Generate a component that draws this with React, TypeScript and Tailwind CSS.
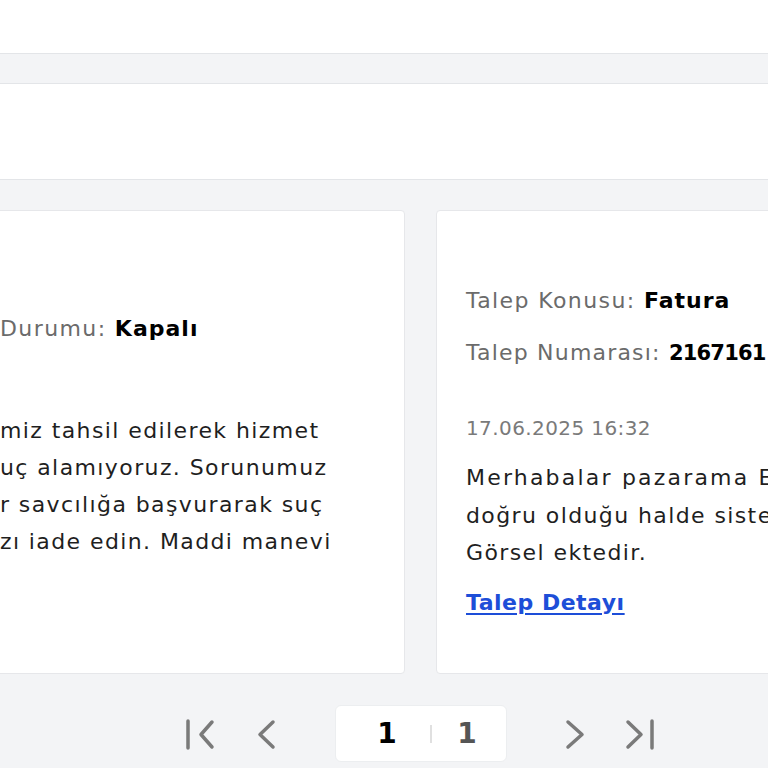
import type { ReactNode } from 'react';

const font = { fontFamily: '"DejaVu Sans", "Noto Sans", sans-serif' };

function ClippedLine({ hidden, children, className = '' }: { hidden: string; children: ReactNode; className?: string }) {
  // left part of the line sits outside the viewport
  return (
    <div className={`flex whitespace-nowrap ${className}`}>
      <span className="w-[125px] shrink-0 text-right">{hidden}</span>
      <span>{children}</span>
    </div>
  );
}

function PagerIcon({ d }: { d: string }) {
  return (
    <svg className="w-[32px] h-[32px] shrink-0" viewBox="0 0 32 32" fill="none" stroke="#7a7a7a" strokeWidth={3.5} strokeLinecap="round" strokeLinejoin="round">
      <path d={d} />
    </svg>
  );
}

export default function App() {
  return (
    <div className="h-screen w-full overflow-hidden bg-[#f3f4f6] text-[22px] tracking-[1.4px]" style={font}>
      {/* header strips */}
      <div className="h-[54px] bg-white border-b border-[#e3e5e8]" />
      <div className="h-[29px]" />
      <div className="h-[97px] bg-white border-y border-[#e3e5e8]" />

      {/* cards */}
      <div className="mt-[30px] -ml-[155px] flex gap-[31px]">
        <div className="w-[560px] h-[464px] shrink-0 bg-white border border-[#e6e7ea] rounded-[4px] pl-[29px] pt-[99px]">
          <ClippedLine hidden="Talep " className="leading-[38px] text-[#6b6b6b]">
            Durumu: <b className="font-bold text-black tracking-[1px]">Kapalı</b>
          </ClippedLine>
          <div className="mt-[64px] leading-[37px] text-[#1f1f1f]">
            <ClippedLine hidden="Ücreti">miz tahsil edilerek hizmet</ClippedLine>
            <ClippedLine hidden="son">uç alamıyoruz. Sorunumuz</ClippedLine>
            <ClippedLine hidden="Bizle">r savcılığa başvurarak suç</ClippedLine>
            <ClippedLine hidden="Paramı">zı iade edin. Maddi manevi</ClippedLine>
          </div>
        </div>

        <div className="w-[560px] h-[464px] shrink-0 bg-white border border-[#e6e7ea] rounded-[4px] pl-[29px] pt-[71px] whitespace-nowrap">
          <div className="leading-[38px] text-[#6b6b6b]">
            Talep Konusu: <b className="font-bold text-black tracking-[1px]">Fatura</b>
          </div>
          <div className="mt-[14px] leading-[38px] text-[#6b6b6b] tracking-[1.2px]">
            Talep Numarası: <b className="font-bold text-black text-[21px] tracking-[-0.8px]">2167161</b>
          </div>
          <div className="mt-[37px] leading-[38px] text-[20px] tracking-[0.4px] text-[#7a7a7a]">17.06.2025 16:32</div>
          <div className="mt-[12px] leading-[37.5px] text-[#1f1f1f]">
            <div className="tracking-[2.2px]">Merhabalar pazarama Elektrik fatura bilgilerimiz</div>
            <div>doğru olduğu halde sistemde hata görünmektedir.</div>
            <div>Görsel ektedir.</div>
          </div>
          <a href="#" className="mt-[12px] block leading-[38px] font-bold tracking-[0.5px] text-[#1d4ed8] underline underline-offset-[3px]">
            Talep Detayı
          </a>
        </div>
      </div>

      {/* pagination */}
      <div className="mt-[31px] ml-[184px] flex items-center tracking-normal">
        <PagerIcon d="M4 3V30M28 4L17 16.5L28 29" />
        <div className="ml-[35px]">
          <PagerIcon d="M22 4L9 16.5L22 29" />
        </div>
        <div className="ml-[52px] w-[172px] h-[57px] bg-white border border-[#eceef0] rounded-[6px] flex items-center pl-[31px] text-[28px]">
          <span className="w-[40px] text-center font-bold text-black">1</span>
          <span className="ml-[23px] w-[2px] h-[18px] bg-[#e0e0e0]" />
          <span className="ml-[15px] w-[40px] text-center font-semibold text-[#555555]">1</span>
        </div>
        <div className="ml-[52px]">
          <PagerIcon d="M9 4L23 16.5L9 29" />
        </div>
        <div className="ml-[33px]">
          <PagerIcon d="M4 4L17 16.5L4 29M28 3V30" />
        </div>
      </div>
    </div>
  );
}
